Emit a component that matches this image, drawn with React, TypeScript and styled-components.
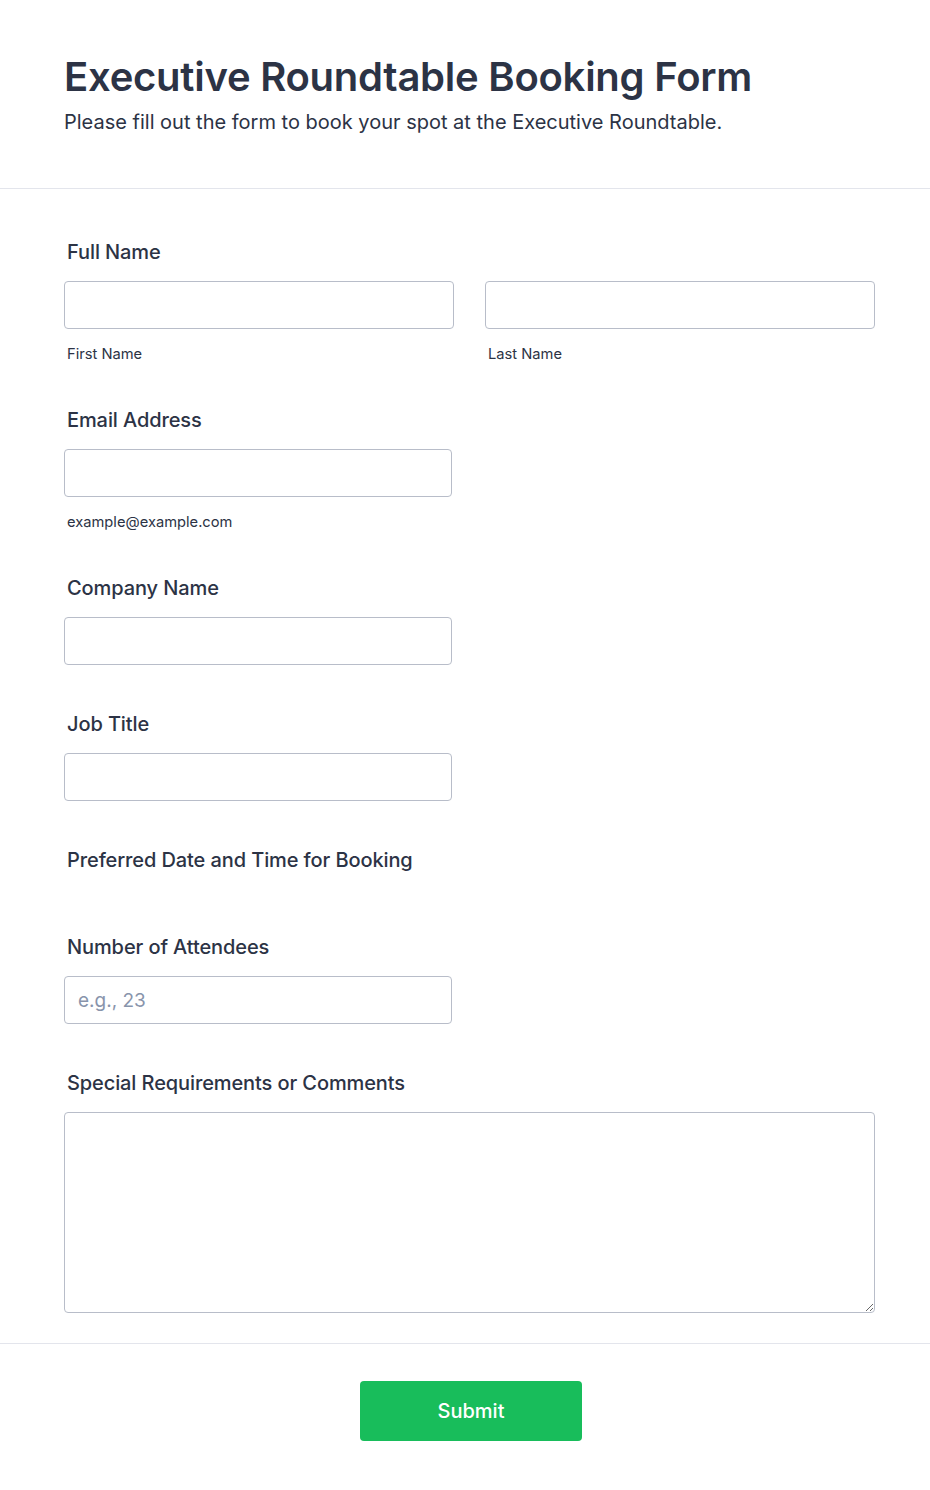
import React from "react";
import styled, { createGlobalStyle } from "styled-components";

const Global = createGlobalStyle`
  html, body { margin: 0; padding: 0; background: #ffffff; }
  body { font-family: Inter, "Noto Sans", sans-serif; color: #2c3345; }
  * { box-sizing: border-box; }
`;

const Page = styled.div`
  width: 930px;
  min-height: 1490px;
  background: #fff;
  display: flex;
  flex-direction: column;
`;

const Header = styled.header`
  padding: 52px 64px 0 64px;
  height: 189px;
  border-bottom: 1px solid #e3e5ec;
`;

const Title = styled.h1`
  margin: 0;
  font-size: 40px;
  line-height: 50px;
  font-weight: 600;
  letter-spacing: -0.25px;
  color: #2c3345;
`;

const Subtitle = styled.p`
  margin: 7px 0 0 0;
  font-size: 20px;
  line-height: 26px;
  font-weight: 400;
  color: #2c3345;
`;

const Body = styled.div`
  padding: 51px 55px 30px 64px;
  display: flex;
  flex-direction: column;
  gap: 47px;
  border-bottom: 1px solid #e3e5ec;
`;

const Field = styled.div`
  display: flex;
  flex-direction: column;
`;

const Label = styled.label<{ $mb?: number }>`
  display: block;
  margin: 0 0 ${(p) => p.$mb ?? 17}px 3px;
  font-size: 20px;
  line-height: 24px;
  font-weight: 500;
  letter-spacing: -0.1px;
  color: #2c3345;
`;

const Row = styled.div`
  display: grid;
  grid-template-columns: 390px 390px;
  column-gap: 31px;
`;

const Col = styled.div`
  display: flex;
  flex-direction: column;
`;

const Input = styled.input<{ $w?: number }>`
  width: ${(p) => (p.$w ? `${p.$w}px` : "100%")};
  height: 48px;
  border: 1px solid #b8bdc9;
  border-radius: 4px;
  padding: 0 13px;
  font-family: Inter, sans-serif;
  font-size: 19px;
  color: #2c3345;
  background: #fff;
  outline: none;
  &::placeholder { color: #8894ab; }
`;

const TextArea = styled.textarea`
  width: 811px;
  height: 201px;
  border: 1px solid #b8bdc9;
  border-radius: 4px;
  padding: 10px 13px;
  font-family: Inter, sans-serif;
  font-size: 18px;
  resize: vertical;
  outline: none;
`;

const Sub = styled.span`
  margin: 18px 0 0 3px;
  font-size: 14.7px;
  line-height: 14px;
  color: #2c3345;
`;

const Footer = styled.div`
  display: flex;
  justify-content: center;
  padding: 37px 0 49px 12px;
`;

const Submit = styled.button`
  width: 222px;
  height: 60px;
  background: #18bd5b;
  border: none;
  border-radius: 4px;
  color: #fff;
  font-family: Inter, sans-serif;
  font-size: 20px;
  font-weight: 500;
  cursor: pointer;
`;

export default function App() {
  return (
    <Page>
      <Global />
      <Header>
        <Title>Executive Roundtable Booking Form</Title>
        <Subtitle>Please fill out the form to book your spot at the Executive Roundtable.</Subtitle>
      </Header>
      <Body>
        <Field>
          <Label>Full Name</Label>
          <Row>
            <Col>
              <Input />
              <Sub>First Name</Sub>
            </Col>
            <Col>
              <Input />
              <Sub>Last Name</Sub>
            </Col>
          </Row>
        </Field>
        <Field>
          <Label>Email Address</Label>
          <Input $w={388} />
          <Sub>example@example.com</Sub>
        </Field>
        <Field>
          <Label>Company Name</Label>
          <Input $w={388} />
        </Field>
        <Field>
          <Label>Job Title</Label>
          <Input $w={388} />
        </Field>
        <Field>
          <Label $mb={16}>Preferred Date and Time for Booking</Label>
        </Field>
        <Field>
          <Label>Number of Attendees</Label>
          <Input $w={388} placeholder="e.g., 23" />
        </Field>
        <Field>
          <Label>Special Requirements or Comments</Label>
          <TextArea />
        </Field>
      </Body>
      <Footer>
        <Submit>Submit</Submit>
      </Footer>
    </Page>
  );
}
